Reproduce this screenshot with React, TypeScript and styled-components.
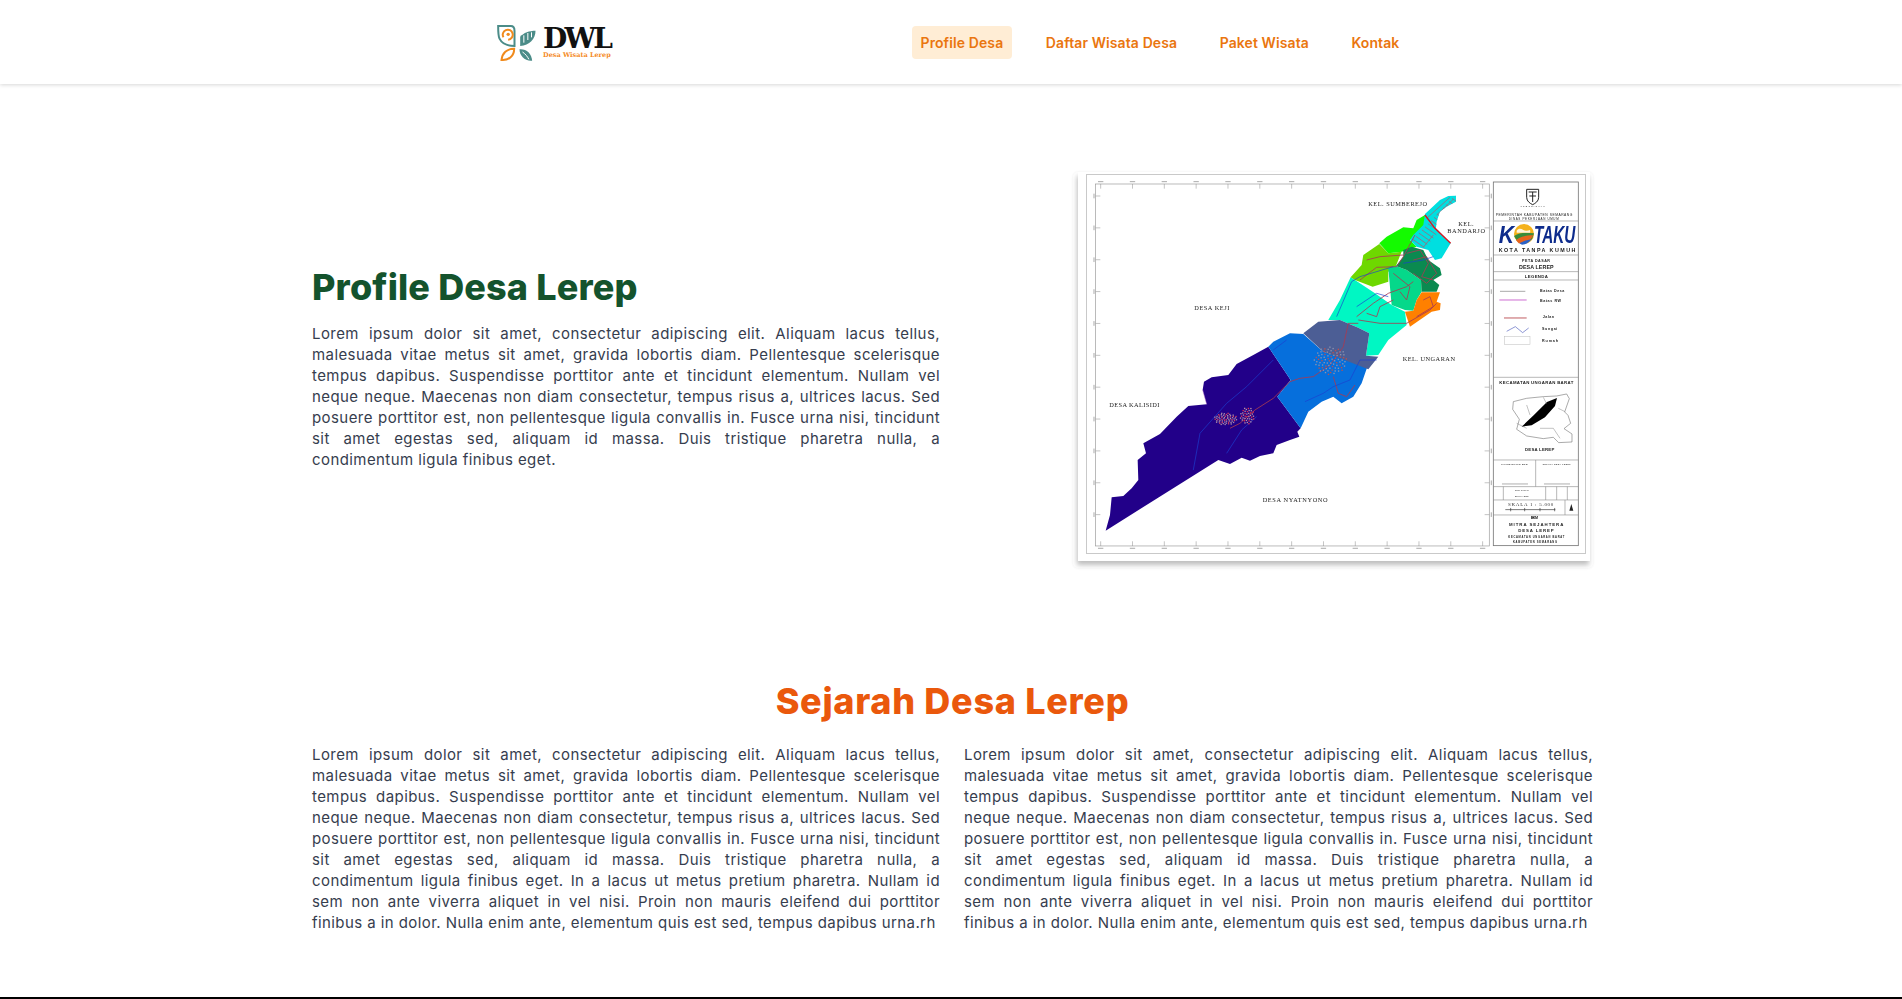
import React from "react";
import styled, { createGlobalStyle } from "styled-components";

const Global = createGlobalStyle`
  html, body { margin: 0; padding: 0; height: 100%; overflow: hidden; background: #fff; }
  body { font-family: Inter, "Open Sans", sans-serif; }
`;

const Header = styled.header`
  height: 84px;
  background: #fff;
  box-shadow: 0 1px 4px rgba(0, 0, 0, 0.16);
  display: flex;
  align-items: center;
  padding-left: 496px;
  position: relative;
`;
const Brand = styled.a`
  display: flex;
  align-items: center;
  gap: 6px;
  width: 416px;
`;
const BrandText = styled.div`
  display: flex;
  flex-direction: column;
  margin-top: 2px;
`;
const BrandName = styled.span`
  font-family: "DejaVu Serif", serif;
  font-weight: 700;
  font-size: 28px;
  line-height: 25px;
  color: #111;
  letter-spacing: -2.8px;
`;
const BrandSub = styled.span`
  font-family: "DejaVu Serif", serif;
  font-weight: 700;
  font-size: 6.5px;
  line-height: 9px;
  color: #f58a1f;
  white-space: nowrap;
`;
const Nav = styled.nav`
  display: flex;
  gap: 25.5px;
`;
const NavLink = styled.a<{ $active?: boolean }>`
  height: 33px;
  padding: 0 8.5px;
  display: flex;
  align-items: center;
  border-radius: 4px;
  font-size: 14px;
  font-weight: 600;
  letter-spacing: 0.1px;
  color: #ea760f;
  background: ${(p) => (p.$active ? "#ffedd5" : "transparent")};
  white-space: nowrap;
`;
const Main = styled.main`
  width: 1281px;
  margin-left: 312px;
  padding: 88px 0 64px;
  display: flex;
  flex-direction: column;
`;
const Hero = styled.section`
  display: grid;
  grid-template-columns: 628px 520px;
  justify-content: space-between;
  align-items: center;
`;
const HeroCopy = styled.div`
  margin-bottom: 4px;
`;
const HeroTitle = styled.h1`
  margin: 0 0 16px;
  font-size: 36px;
  line-height: 40px;
  font-weight: 800;
  letter-spacing: 0.15px;
  color: #14532d;
`;
const MapCard = styled.figure`
  margin: 0;
  height: 396px;
  box-sizing: border-box;
  padding: 0 3px 7px 5px;
  border-radius: 5px;
  background: #fff;
  box-shadow: 0 0 3px rgba(0, 0, 0, 0.05);
`;
const MapPaper = styled.div`
  height: 389px;
  box-sizing: border-box;
  padding: 3px 5px 8px 9px;
  background: #fff;
  box-shadow: -1px 4px 5px rgba(0, 0, 0, 0.26);
`;
const MapSheet = styled.svg`
  display: block;
  width: 498px;
  height: 378px;
  background: #fff;
  outline: 1.5px solid #c9c9c9;
  filter: blur(0.4px);
`;
const History = styled.section`
  margin-top: 113px;
`;
const HistoryTitle = styled.h2`
  margin: 0 0 23px;
  font-size: 36px;
  line-height: 40px;
  font-weight: 800;
  letter-spacing: 0.7px;
  color: #ea580c;
  text-align: center;
`;
const Columns = styled.div`
  display: grid;
  grid-template-columns: 628px 629px;
  justify-content: space-between;
`;
const Para = styled.p`
  margin: 0;
  font-size: 15px;
  line-height: 21px;
  letter-spacing: 0.42px;
  color: #363d4e;
`;
const Line = styled.span<{ $last?: boolean }>`
  display: block;
  white-space: nowrap;
  text-align: justify;
  text-align-last: ${(p) => (p.$last ? "left" : "justify")};
`;
const Footer = styled.footer`
  height: 60px;
  background: #000;
`;

const base = [
  "Lorem ipsum dolor sit amet, consectetur adipiscing elit. Aliquam lacus tellus,",
  "malesuada vitae metus sit amet, gravida lobortis diam. Pellentesque scelerisque",
  "tempus dapibus. Suspendisse porttitor ante et tincidunt elementum. Nullam vel",
  "neque neque. Maecenas non diam consectetur, tempus risus a, ultrices lacus. Sed",
  "posuere porttitor est, non pellentesque ligula convallis in. Fusce urna nisi, tincidunt",
  "sit amet egestas sed, aliquam id massa. Duis tristique pharetra nulla, a",
];
const heroLines = [...base, "condimentum ligula finibus eget."];
const historyLines = [
  ...base,
  "condimentum ligula finibus eget. In a lacus ut metus pretium pharetra. Nullam id",
  "sem non ante viverra aliquet in vel nisi. Proin non mauris eleifend dui porttitor",
  "finibus a in dolor. Nulla enim ante, elementum quis est sed, tempus dapibus urna.rh",
];

const Paragraph = ({ lines }: { lines: string[] }) => (
  <Para>
    {lines.map((l, i) => (
      <Line key={i} $last={i === lines.length - 1}>
        {l}
      </Line>
    ))}
  </Para>
);

const Logo = () => (
  <svg width="41" height="39" viewBox="18 15 122 117" fill="none">
    <path d="M24 24H62C70 24 73 30 73 38V84C50 84 36 78 28 62 24 54 24 40 24 24z" stroke="#4b8c88" strokeWidth="6" />
    <path d="M40 58a15 15 0 1 1 14 7" stroke="#f08a1c" strokeWidth="6" />
    <circle cx="54" cy="49" r="5" fill="#f08a1c" />
    <path d="M72 92C50 92 36 106 34 126 56 128 72 114 72 92z" stroke="#f08a1c" strokeWidth="6" />
    <path d="M90 84V56C100 44 118 38 136 38 136 62 118 82 90 84z" fill="#4b8c88" />
    <path d="M101 74V52M113 66V45M124 58V43" stroke="#fff" strokeWidth="3" />
    <path d="M88 94C108 92 124 106 126 128 104 130 88 114 88 94z" fill="#4b8c88" />
    <path d="M97 102C106 108 112 116 116 124" stroke="#fff" strokeWidth="3" />
  </svg>
);

const ticksX = Array.from({ length: 13 }, (_, i) => 122 + i * 95.5);
const ticksY = Array.from({ length: 11 }, (_, i) => 108 + i * 95.6);

const speck = (cx: number, cy: number, rx: number, ry: number, n: number, seed: number) =>
  Array.from({ length: n }, (_, i) => {
    const a = (i * 2.399963 + seed) % (Math.PI * 2);
    const r = Math.sqrt((i + 0.5) / n);
    return [cx + Math.cos(a) * r * rx, cy + Math.sin(a) * r * ry];
  });

const cyanPoints =
  "1095,162 1140,120 1165,108 1188,107 1188,125 1160,140 1140,155 1130,185 1128,205 1172,250 1145,295 1125,300 1105,270 1070,260 1050,240 1060,225 1090,195";

const regions: [string, string][] = [
  ["#220089", "137,1112 150,1065 155,1012 190,1008 215,985 235,960 233,900 258,880 250,850 300,822 350,770 385,738 440,733 428,690 432,665 455,652 505,645 530,612 580,585 625,560 672,630 692,660 652,710 722,805 712,815 718,830 690,840 650,855 640,880 600,888 570,902 545,893 510,912 475,900"],
  ["#066fdc", "625,560 640,545 690,520 730,522 790,575 925,612 905,670 880,710 845,730 820,710 785,725 745,755 722,805 652,710 692,660 672,630"],
  ["#00f7c3", "805,480 840,420 872,352 885,360 945,400 995,435 1035,455 1040,495 985,540 955,585 918,587 928,520 895,503 840,480"],
  ["#4c5e95", "730,520 775,485 840,480 895,503 928,520 918,587 955,590 925,628 790,575"],
  ["#6ed800", "872,352 905,315 910,285 958,252 985,280 1025,275 1005,325 985,335 985,365 938,380 885,360"],
  ["#14fa00", "958,250 980,230 1030,202 1060,205 1070,180 1095,165 1110,200 1050,240 1070,260 1025,275 985,280"],
  ["#00dfe0", cyanPoints],
  ["#05d88a", "985,325 1008,318 1040,330 1083,360 1085,395 1070,420 1060,452 1035,450 995,435 990,380"],
  ["#0a8a50", "1030,270 1055,260 1090,270 1105,300 1140,325 1145,345 1120,360 1138,375 1130,395 1085,395 1083,360 1040,330 1008,318 1030,290"],
  ["#ff8000", "1085,397 1140,397 1130,425 1142,430 1140,450 1115,455 1050,500 1035,455 1060,452 1070,420"],
];

const roads = [
  "585,750 640,715 690,665 720,655 760,650 810,615 850,560 865,490 895,490",
  "820,650 835,700 860,710 885,675",
  "510,805 540,790 585,750",
  "890,470 940,430 985,400 1040,380 1060,365",
  "895,480 960,490 1040,490 1110,450 1130,430",
  "900,360 950,322 1010,320 1030,290 1065,225",
  "920,300 960,290 1030,285",
  "1060,300 1100,290 1130,340 1100,370 1060,340",
  "1040,280 1080,270 1105,310 1085,350 1120,360",
  "1000,340 1050,380 1040,420 1020,395",
  "1090,420 1110,410 1120,440 1070,470",
  "920,460 950,470 960,440 1000,420",
];
const rivers = [
  "400,930 420,820 500,730 560,680 640,600",
  "500,880 545,810 590,770",
  "735,725 790,700 820,680 870,660 900,600 950,600",
  "640,570 680,540",
  "830,470 875,365 900,350 1000,320",
  "890,440 950,400 985,410",
  "1030,310 1090,300 1120,290",
];
const hatch = Array.from({ length: 16 }, (_, i) => i);

const LegendText = styled.text<{ $size?: number }>`
  font-family: "Liberation Sans", sans-serif;
  font-weight: 700;
  font-size: ${(p) => p.$size ?? 10}px;
  fill: #222;
`;
const PlaceName = styled.text`
  font-family: "Liberation Serif", serif;
  font-size: 19px;
  fill: #222;
`;

const MapDrawing = () => (
  <MapSheet viewBox="0 0 498 378">
    <defs>
      <clipPath id="cyan-area">
        <polygon points={cyanPoints} />
      </clipPath>
    </defs>
    <g transform="translate(-27,-15) scale(0.3333)">
      <rect x="107" y="72" width="1181" height="1086" fill="none" stroke="#999" strokeWidth="2" />
      {ticksX.map((x) => (
        <g key={x} stroke="#888" strokeWidth="1.5">
          <path d={`M${x} 72v14M${x} 1158v-14`} />
          <path d={`M${x - 8} 65h16M${x - 8} 1165h16`} strokeWidth="3" stroke="#aaa" />
        </g>
      ))}
      {ticksY.map((y) => (
        <g key={y} stroke="#888" strokeWidth="1.5">
          <path d={`M107 ${y}h14M1288 ${y}h-14`} />
          <path d={`M102 ${y - 7}v14M1294 ${y - 7}v14`} strokeWidth="3" stroke="#aaa" />
        </g>
      ))}
      {regions.map(([c, p]) => (
        <polygon key={p} points={p} fill={c} />
      ))}
      {roads.map((p) => (
        <polyline key={p} points={p} fill="none" stroke="#a83a52" strokeWidth="2.5" />
      ))}
      <g clipPath="url(#cyan-area)" stroke="#9c6a7c" strokeWidth="2.5">
        {hatch.map((i) => (
          <path key={i} d={`M${1050 + i * 9} ${248 - i * 9.5}l34 24`} />
        ))}
        <path d="M1100 175L1170 112M1130 165L1180 118M1120 225L1090 262" />
      </g>
      {rivers.map((p) => (
        <polyline key={p} points={p} fill="none" stroke="#1b3fd0" strokeWidth="2" />
      ))}
      {speck(495, 775, 35, 18, 60, 1).map(([x, y], i) => (
        <rect key={`a${i}`} x={x} y={y} width="4" height="4" fill={i % 3 ? "#a88aa8" : "#d04060"} />
      ))}
      {speck(560, 765, 22, 25, 40, 2).map(([x, y], i) => (
        <rect key={`b${i}`} x={x} y={y} width="4" height="4" fill={i % 3 ? "#b890a8" : "#e03050"} />
      ))}
      {speck(810, 600, 50, 42, 80, 3).map(([x, y], i) => (
        <rect key={`c${i}`} x={x} y={y} width="4" height="4" fill={i % 3 ? "#8f93ad" : "#c0504a"} />
      ))}
      <polyline points="1095,165 1125,205 1172,250" fill="none" stroke="#e0101c" strokeWidth="4" />
      <polyline points="428,690 440,733" fill="none" stroke="#c080d0" strokeWidth="1.5" />
      <PlaceName x="925" y="139" textLength="176">KEL. SUMBEREJO</PlaceName>
      <PlaceName x="1195" y="197" textLength="46">KEL.</PlaceName>
      <PlaceName x="1162" y="220" textLength="113">BANDARJO</PlaceName>
      <PlaceName x="403" y="450" textLength="105">DESA KEJI</PlaceName>
      <PlaceName x="1028" y="602" textLength="157">KEL. UNGARAN</PlaceName>
      <PlaceName x="148" y="740" textLength="150">DESA KALISIDI</PlaceName>
      <PlaceName x="608" y="1026" textLength="195">DESA NYATNYONO</PlaceName>
    </g>
    <g transform="translate(393,-15) scale(0.3333)">
      <rect x="40" y="66" width="255" height="1091" fill="#fff" stroke="#777" strokeWidth="2.5" />
      <path d="M40 183H295M40 285H295M40 335H295M40 360H295M40 652H295M40 900H295M40 1020H295M40 1065H295M167 900V980M40 980H295M70 980V1020M197 980V1020M230 980V1020M262 980V1020M255 1020V1065" stroke="#888" strokeWidth="1.8" fill="none" />
      <path d="M140 88h36v24c0 12-10 18-18 22-8-4-18-10-18-22z" fill="#fff" stroke="#222" strokeWidth="3" />
      <path d="M146 96h24M158 96v30M148 108h20" stroke="#222" strokeWidth="3" />
      <LegendText x="122" y="141" $size={5} textLength="72">PEMERINTAH</LegendText>
      <LegendText x="47" y="167" $size={10} textLength="230" style={{ fontWeight: 400 }}>PEMERINTAH KABUPATEN SEMARANG</LegendText>
      <LegendText x="86" y="180" $size={9} textLength="150" style={{ fontWeight: 400 }}>DINAS PEKERJAAN UMUM</LegendText>
      <LegendText x="56" y="250" $size={74} style={{ fill: "#0d2b8c", fontStyle: "italic" }} textLength="46" lengthAdjust="spacingAndGlyphs">K</LegendText>
      <LegendText x="162" y="250" $size={74} style={{ fill: "#0d2b8c", fontStyle: "italic" }} textLength="124" lengthAdjust="spacingAndGlyphs">TAKU</LegendText>
      <circle cx="132" cy="222" r="30" fill="#f5b21c" />
      <path d="M102 228c20-14 40-10 60-8l-6 18c-14 10-32 12-44 6z" fill="#3a8c3a" />
      <path d="M108 240c18-12 34-14 52-14l-8 12c-12 10-28 14-36 12z" fill="#e8641c" />
      <path d="M118 250c12-8 24-10 36-12-8 12-20 16-28 16z" fill="#2a62c8" />
      <path d="M110 212c6-8 14-6 20-2s14 2 20 0c2 4 0 8 0 8h-40z" fill="#fff" opacity="0.85" />
      <LegendText x="56" y="276" $size={16} textLength="230">KOTA TANPA KUMUH</LegendText>
      <LegendText x="126" y="305" $size={11} textLength="84">PETA DASAR</LegendText>
      <LegendText x="117" y="326" $size={16} textLength="104">DESA LEREP</LegendText>
      <LegendText x="134" y="354" $size={13} textLength="70">LEGENDA</LegendText>
      <path d="M60 394h76" stroke="#999" strokeWidth="2.5" />
      <path d="M58 420h82" stroke="#c34fc8" strokeWidth="2.5" />
      <path d="M72 474h68" stroke="#c05b60" strokeWidth="3" />
      <path d="M80 514l26-14 22 18 18-14" stroke="#5462c0" strokeWidth="2" fill="none" />
      <rect x="73" y="529" width="77" height="24" fill="#fff" stroke="#bbb" strokeWidth="1.5" />
      <LegendText x="180" y="395" $size={11} textLength="73">Batas Desa</LegendText>
      <LegendText x="180" y="427" $size={11} textLength="63">Batas RW</LegendText>
      <LegendText x="188" y="473" $size={11} textLength="34">Jalan</LegendText>
      <LegendText x="186" y="511" $size={11} textLength="46">Sungai</LegendText>
      <LegendText x="186" y="545" $size={11} textLength="48">Rumah</LegendText>
      <LegendText x="58" y="672" $size={13} textLength="222">KECAMATAN UNGARAN BARAT</LegendText>
      <path d="M100 725l40-10 50-5 40-2 30-6 8 14-14 40 10 10 8 24-20 16 24 16 0 24-40 2-16-16-30 4-50-8-30-20 8-30-20-30z" fill="#fff" stroke="#555" strokeWidth="1.5" />
      <path d="M125 800l36-34 40-40 30-12-6 24-30 34-40 24z" fill="#000" />
      <path d="M140 735l10 30M190 712l10 20M235 745l20 10M180 805l40 0 20 30M110 790l30 15" stroke="#666" strokeWidth="1.2" fill="none" />
      <LegendText x="135" y="873" $size={13} textLength="88">DESA LEREP</LegendText>
      <LegendText x="64" y="914" $size={6} textLength="78">KOORDINATOR BKM</LegendText>
      <LegendText x="188" y="914" $size={6} textLength="84">KEPALA DESA LEREP</LegendText>
      <path d="M66 972h78M192 972h78" stroke="#666" strokeWidth="1.6" />
      <LegendText x="105" y="993" $size={5} textLength="40">PETA DASAR</LegendText>
      <LegendText x="105" y="1012" $size={5} textLength="40">SKALA 1 : 5.000</LegendText>
      <text x="84" y="1037" fontFamily="Liberation Serif, serif" fontSize="15" fill="#333" textLength="136">SKALA 1 : 5.000</text>
      <path d="M76 1049H226M92 1044v10M134 1044v10M180 1044v10M224 1044v10" stroke="#333" strokeWidth="2" />
      <path d="M274 1032l-6 20h12z" fill="#222" />
      <LegendText x="152" y="1078" $size={11} textLength="22">BKM</LegendText>
      <LegendText x="87" y="1098" $size={13} textLength="163">MITRA SEJAHTERA</LegendText>
      <LegendText x="115" y="1116" $size={13} textLength="106">DESA LEREP</LegendText>
      <LegendText x="85" y="1134" $size={8} textLength="168">KECAMATAN UNGARAN BARAT</LegendText>
      <LegendText x="99" y="1148" $size={8} textLength="132">KABUPATEN SEMARANG</LegendText>
    </g>
  </MapSheet>
);

export default function App() {
  return (
    <>
      <Global />
      <Header>
        <Brand>
          <Logo />
          <BrandText>
            <BrandName>DWL</BrandName>
            <BrandSub>Desa Wisata Lerep</BrandSub>
          </BrandText>
        </Brand>
        <Nav>
          <NavLink $active>Profile Desa</NavLink>
          <NavLink>Daftar Wisata Desa</NavLink>
          <NavLink>Paket Wisata</NavLink>
          <NavLink>Kontak</NavLink>
        </Nav>
      </Header>
      <Main>
        <Hero>
          <HeroCopy>
            <HeroTitle>Profile Desa Lerep</HeroTitle>
            <Paragraph lines={heroLines} />
          </HeroCopy>
          <MapCard>
            <MapPaper>
              <MapDrawing />
            </MapPaper>
          </MapCard>
        </Hero>
        <History>
          <HistoryTitle>Sejarah Desa Lerep</HistoryTitle>
          <Columns>
            <Paragraph lines={historyLines} />
            <Paragraph lines={historyLines} />
          </Columns>
        </History>
      </Main>
      <Footer />
    </>
  );
}
